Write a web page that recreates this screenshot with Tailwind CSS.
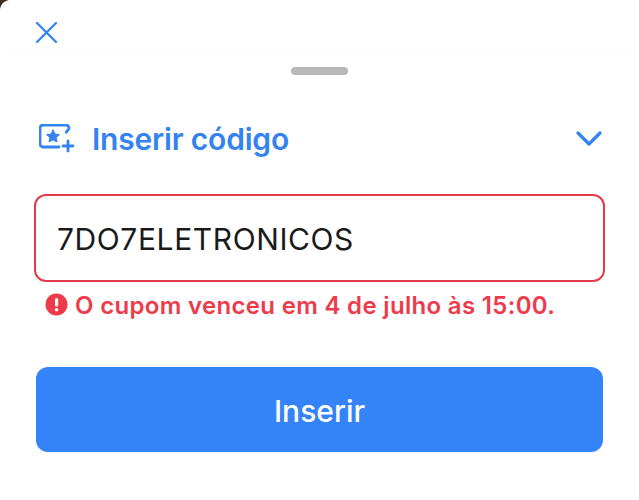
<!DOCTYPE html>
<html lang="en">
<head>
  <meta charset="UTF-8" />
  <title>Inserir código</title>
  <script src="https://cdn.jsdelivr.net/npm/@tailwindcss/browser@4"></script>
</head>
<body class="bg-white font-['Inter',sans-serif] w-[639px] h-[500px] overflow-hidden">
  <div class="relative h-[500px] bg-white">
    <!-- corner of the screen behind the modal -->
    <svg class="absolute left-0 top-0" width="10" height="10" viewBox="0 0 10 10"><path d="M0 0H9C4 1 1 4 0 9Z" fill="#3a3320"/></svg>

    <!-- Close -->
    <div class="h-[53px] pl-[36px] pt-[22px]">
      <svg width="21" height="21" viewBox="0 0 21 21" fill="none" stroke="#3483f0" stroke-width="2.300" stroke-linecap="round"><path d="M1 1L20 20M20 1L1 20"/></svg>
    </div>

    <!-- Sheet -->
    <div class="h-[447px] rounded-t-[18px] border-t border-[#fbfbfb] bg-white px-[36px]">
      <div class="mx-auto mt-[13px] h-[8px] w-[57px] rounded-full bg-[#b9b9b9]"></div>

      <div class="mt-[44px] flex h-[40px] items-center">
        <svg class="ml-[3px]" width="36" height="30" viewBox="0 0 36 30" fill="none" stroke="#3483f0" stroke-width="2.800" stroke-linecap="round" stroke-linejoin="round">
          <path d="M20 23H4a3 3 0 0 1-3-3V4a3 3 0 0 1 3-3h23a3 3 0 0 1 2.800 3.800c-.4 1.400-2.200 2-2.600 3.600"/>
          <path d="M29 17v10M24 22h10"/>
          <path d="M14 6l2 4 4.400.6-3.200 3 .8 4.400-4-2.100-4 2.100.8-4.400-3.200-3 4.400-.6z" fill="#3483f0" stroke-width="1"/>
        </svg>
        <span class="ml-[17px] text-[30px] leading-[40px] font-semibold tracking-[-0.2px] text-[#3483f0]">Inserir código</span>
        <svg class="ml-auto mr-[1px]" width="26" height="16" viewBox="0 0 26 16" fill="none" stroke="#3483f0" stroke-width="3.200" stroke-linecap="round" stroke-linejoin="round"><path d="M2 2L13 13L24 2"/></svg>
      </div>

      <div class="-ml-[2px] mt-[35px] flex h-[88px] w-[571px] items-center rounded-[12px] border-2 border-[#e23b4c] pl-[21px] pt-[2px] text-[30px] tracking-[0.6px] text-[#1a1a1a]">7DO7ELETRONICOS</div>

      <div class="mt-[10px] flex items-start pl-[9px]">
        <svg class="mt-[1px]" width="23" height="23" viewBox="0 0 23 23"><circle cx="11.500" cy="11.500" r="11" fill="#ee3b4b"/><rect x="10" y="5" width="3.200" height="8.500" rx="1.600" fill="#fff"/><circle cx="11.600" cy="16.800" r="1.800" fill="#fff"/></svg>
        <span class="ml-[7px] text-[24px] leading-[28px] font-semibold tracking-[0.32px] text-[#ee3b4b]">O cupom venceu em 4 de julho às 15:00.</span>
      </div>

      <button class="mt-[47px] flex h-[85px] w-[567px] items-center justify-center rounded-[12px] bg-[#3483f8] pt-[3px] text-[30px] font-medium text-white">Inserir</button>
    </div>
  </div>
</body>
</html>
